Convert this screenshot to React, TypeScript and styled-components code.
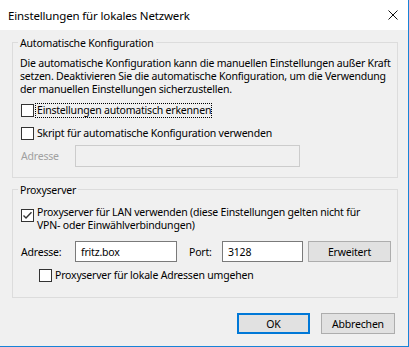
import React from "react";
import styled, { createGlobalStyle } from "styled-components";

const GlobalStyle = createGlobalStyle`
  html, body {
    margin: 0;
    padding: 0;
    background: #f0f0f0;
  }
`;

const App: React.FC = () => {
  return (
    <>
      <GlobalStyle />
      <Window>
        <TitleBar>
          <Title>Einstellungen für lokales Netzwerk</Title>
          <CloseIcon />
        </TitleBar>
        <Body>
          <Group $height={136}>
            <Legend>Automatische Konfiguration</Legend>
            <Description>
              Die automatische Konfiguration kann die manuellen Einstellungen außer Kraft
              <br />
              setzen. Deaktivieren Sie die automatische Konfiguration, um die Verwendung
              <br />
              der manuellen Einstellungen sicherzustellen.
            </Description>
            <CheckRow $top={8}>
              <Box />
              <FocusLabel>Einstellungen automatisch erkennen</FocusLabel>
            </CheckRow>
            <CheckRow $top={10}>
              <Box />
              <CheckLabel>Skript für automatische Konfiguration verwenden</CheckLabel>
            </CheckRow>
            <FieldRow $top={5}>
              <FieldLabel $disabled $width={54}>Adresse</FieldLabel>
              <Input $width={225} $height={22} $disabled />
            </FieldRow>
          </Group>

          <Group $height={109} $top={11}>
            <Legend>Proxyserver</Legend>
            <CheckRow $top={9}>
              <Box $checked $offset={3}>
                <CheckMark />
              </Box>
              <CheckLabel>
                Proxyserver für LAN verwenden (diese Einstellungen gelten nicht für
                <br />
                VPN- oder Einwählverbindungen)
              </CheckLabel>
            </CheckRow>
            <FieldRow $top={9}>
              <FieldLabel $width={54}>Adresse:</FieldLabel>
              <Input $width={102} $height={21}>fritz.box</Input>
              <FieldLabel $width={33} $left={12}>Port:</FieldLabel>
              <Input $width={81} $height={21}>3128</Input>
              <Button $width={83} $left={5}>Erweitert</Button>
            </FieldRow>
            <CheckRow $top={7} $indent={18}>
              <Box />
              <CheckLabel>Proxyserver für lokale Adressen umgehen</CheckLabel>
            </CheckRow>
          </Group>

          <Footer>
            <Button $width={73} $default>OK</Button>
            <Button $width={74}>Abbrechen</Button>
          </Footer>
        </Body>
      </Window>
    </>
  );
};

const CloseIcon = () => (
  <svg width="10" height="10" viewBox="0 0 10 10" xmlns="http://www.w3.org/2000/svg">
    <path d="M0.5 0.5L9.5 9.5M9.5 0.5L0.5 9.5" stroke="#111" strokeWidth="1" fill="none" />
  </svg>
);

const CheckMark = () => (
  <svg width="11" height="11" viewBox="0 0 11 11" xmlns="http://www.w3.org/2000/svg">
    <path d="M1.5 5.5L4 8L9.5 2.2" stroke="#333" strokeWidth="1.4" fill="none" />
  </svg>
);

const Window = styled.div`
  width: 409px;
  height: 347px;
  box-sizing: border-box;
  display: flex;
  flex-direction: column;
  background: #f0f0f0;
  border-right: 1px solid #1883d7;
  border-bottom: 1px solid #1883d7;
  font-family: "Noto Sans", sans-serif;
  font-size: 10.5px;
  letter-spacing: -0.2px;
  color: #000;
`;

const TitleBar = styled.div`
  height: 30px;
  flex-shrink: 0;
  display: flex;
  align-items: center;
  justify-content: space-between;
  padding: 0 10px 0 8px;
  background: #fff;
`;

const Title = styled.span`
  font-size: 11.5px;
  letter-spacing: -0.15px;
  line-height: 14px;
  margin-top: 1px;
`;

const Body = styled.div`
  flex: 1;
  display: flex;
  flex-direction: column;
  padding: 12px 10px 0 12px;
`;

const Group = styled.div<{ $height: number; $top?: number }>`
  box-sizing: border-box;
  height: ${({ $height }) => $height}px;
  margin-top: ${({ $top }) => $top ?? 0}px;
  border: 1px solid #dcdcdc;
  padding: 0 8px;
  display: flex;
  flex-direction: column;
`;

const Legend = styled.span`
  align-self: flex-start;
  margin: -7px 0 0 -3px;
  padding: 0 2px;
  background: #f0f0f0;
  line-height: 14px;
`;

const Description = styled.p`
  margin: 7px 0 0 -1px;
  line-height: 13px;
  white-space: nowrap;
`;

const CheckRow = styled.div<{ $top: number; $indent?: number }>`
  display: flex;
  align-items: flex-start;
  margin-top: ${({ $top }) => $top}px;
  margin-left: ${({ $indent }) => $indent ?? 0}px;
  line-height: 13px;
`;

const Box = styled.span<{ $checked?: boolean; $offset?: number }>`
  box-sizing: border-box;
  width: 13px;
  height: 13px;
  flex-shrink: 0;
  margin-top: ${({ $offset }) => $offset ?? 0}px;
  border: 1px solid #333;
  background: #fff;
  display: flex;
  align-items: center;
  justify-content: center;
`;

const CheckLabel = styled.span`
  margin-left: 3px;
  white-space: nowrap;
`;

const FocusLabel = styled(CheckLabel)`
  outline: 1px dotted #000;
  outline-offset: 0;
  margin-left: 2px;
  padding-left: 1px;
`;

const FieldRow = styled.div<{ $top: number }>`
  display: flex;
  align-items: center;
  margin-top: ${({ $top }) => $top}px;
`;

const FieldLabel = styled.span<{ $width: number; $left?: number; $disabled?: boolean }>`
  width: ${({ $width }) => $width}px;
  margin-left: ${({ $left }) => $left ?? 0}px;
  flex-shrink: 0;
  color: ${({ $disabled }) => ($disabled ? "#a0a0a0" : "#000")};
`;

const Input = styled.div<{ $width: number; $height: number; $disabled?: boolean }>`
  box-sizing: border-box;
  width: ${({ $width }) => $width}px;
  height: ${({ $height }) => $height}px;
  flex-shrink: 0;
  display: flex;
  align-items: center;
  padding-left: 5px;
  border: 1px solid ${({ $disabled }) => ($disabled ? "#cccccc" : "#7a7a7a")};
  background: ${({ $disabled }) => ($disabled ? "#f0f0f0" : "#fff")};
`;

const Button = styled.div<{ $width: number; $left?: number; $default?: boolean }>`
  box-sizing: border-box;
  width: ${({ $width }) => $width}px;
  height: 21px;
  flex-shrink: 0;
  margin-left: ${({ $left }) => $left ?? 0}px;
  display: flex;
  align-items: center;
  justify-content: center;
  background: #e1e1e1;
  border: ${({ $default }) => ($default ? "2px solid #0078d7" : "1px solid #adadad")};
`;

const Footer = styled.div`
  display: flex;
  justify-content: flex-end;
  gap: 11px;
  margin: 15px 3px 0 0;
`;

export default App;
